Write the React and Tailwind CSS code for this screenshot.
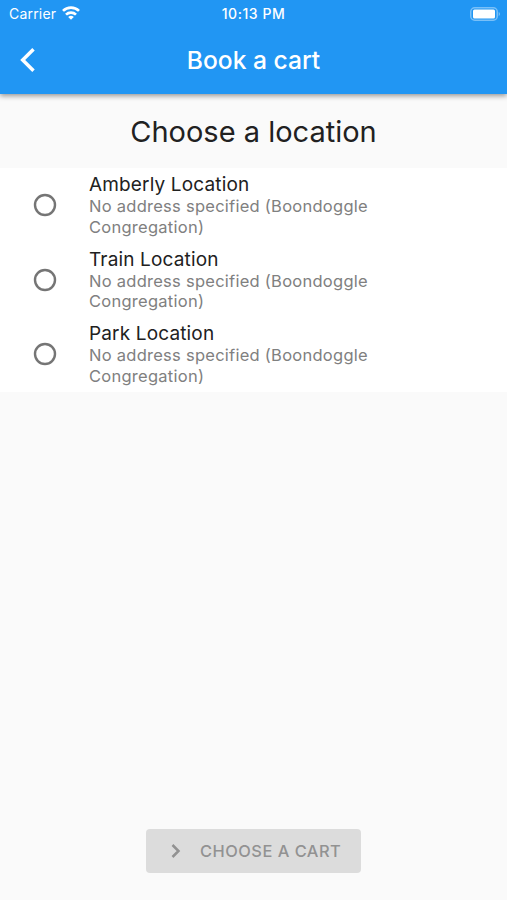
import React, { useState } from "react";

const locations = [
  { id: 1, name: "Amberly Location" },
  { id: 2, name: "Train Location" },
  { id: 3, name: "Park Location" },
];

const StatusBar = () => (
  <div className="h-[27px] grid grid-cols-3 items-center text-[14px] text-white">
    <div className="flex items-center gap-[6px] pl-[9px]">
      <span className="tracking-[0.2px]">Carrier</span>
      <svg viewBox="0 0 18 14" className="w-[18px] h-[14px] -mt-[1px]" fill="none" stroke="currentColor" strokeWidth="2.7">
        <path d="M1 4.9a11.5 11.5 0 0 1 16 0" />
        <path d="M4 8.6a7.2 7.2 0 0 1 10 0" />
        <path d="M9 13.8 6.2 11a4 4 0 0 1 5.6 0Z" fill="currentColor" stroke="none" />
      </svg>
    </div>
    <span className="text-center font-medium tracking-[0.55px]">10:13 PM</span>
    <div className="flex justify-end pr-[6px]">
      <svg viewBox="0 0 31 14" className="w-[31px] h-[14px]">
        <rect x="0.75" y="0.75" width="26.5" height="12.5" rx="4" fill="none" stroke="#fff" strokeOpacity="0.4" strokeWidth="1.5" />
        <rect x="3" y="2.5" width="22" height="9" rx="1.5" fill="#fff" />
        <path d="M28.7 5c1.8.7 1.8 3.3 0 4Z" fill="#fff" fillOpacity="0.4" />
      </svg>
    </div>
  </div>
);

const App = () => {
  const [selected, setSelected] = useState(null);

  return (
    <div className="h-[900px] flex flex-col bg-[#fafafa] font-[Inter,sans-serif]">
      {/* App bar */}
      <header className="relative h-[94px] shrink-0 bg-[#2196f3] shadow-[0_2px_5px_rgba(0,0,0,0.4)]">
        <StatusBar />
        <div className="h-[67px] grid grid-cols-[56px_1fr_56px] items-center text-white">
          <button className="pl-[20px]" aria-label="Back">
            <svg viewBox="0 0 16 26" className="w-[16px] h-[26px] -mt-[2px]" fill="none" stroke="currentColor" strokeWidth="3.5">
              <path d="M13.5 2.3 2.7 13l10.8 10.7" />
            </svg>
          </button>
          <h1 className="text-center text-[24.6px] font-medium">Book a cart</h1>
        </div>
      </header>

      <h2 className="h-[74px] pt-[20px] text-center text-[29px] leading-[36px] text-[#212121]">
        Choose a location
      </h2>

      {/* Locations */}
      <ul className="bg-white">
        {locations.map((location) => (
          <li
            key={location.id}
            onClick={() => setSelected(location.id)}
            className="h-[74.6px] flex items-center pl-[33px]"
          >
            <svg viewBox="0 0 24 24" className="w-[24px] h-[24px] mr-[32px]">
              <circle cx="12" cy="12" r="10" fill="none" stroke="#757575" strokeWidth="2.4" />
              {selected === location.id && <circle cx="12" cy="12" r="5.5" fill="#2196f3" />}
            </svg>
            <div className="w-[330px] pt-[1px]">
              <p className="text-[19px] leading-[22px] tracking-[0.15px] text-[#212121]">{location.name}</p>
              <p className="text-[16.5px] leading-[20.7px] tracking-[0.26px] text-[#808080]">
                No address specified (Boondoggle
                <br />
                Congregation)
              </p>
            </div>
          </li>
        ))}
      </ul>

      <button className="mt-auto mb-[27px] mx-auto w-[215px] h-[44px] rounded-[4px] bg-[#dcdcdc] text-[#929292] flex items-center pl-[25px] text-[16.4px] font-medium tracking-[0.5px]">
        <svg viewBox="0 0 10 16" className="w-[10px] h-[16px] mr-[19px]" fill="none" stroke="currentColor" strokeWidth="2.5">
          <path d="m1.5 2 6 6-6 6" />
        </svg>
        CHOOSE A CART
      </button>
    </div>
  );
};

export default App;
